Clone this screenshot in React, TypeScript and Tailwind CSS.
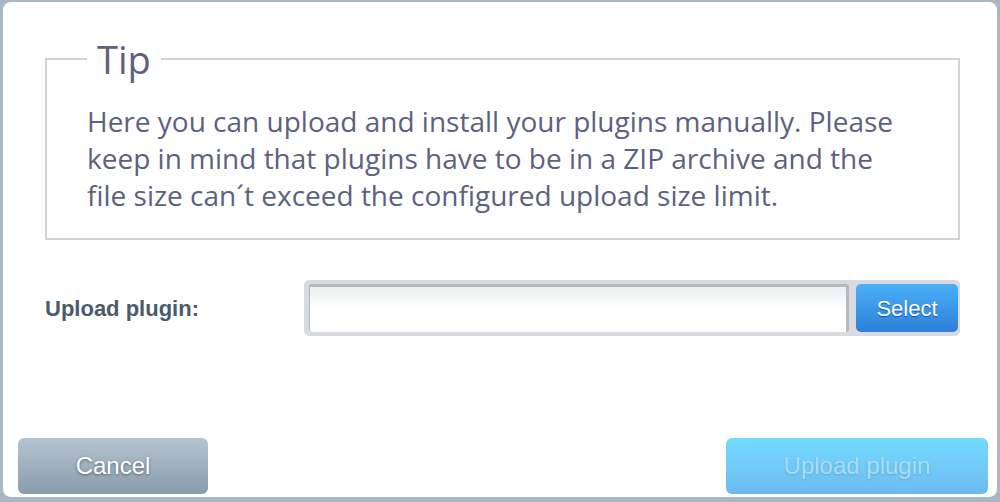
export default function App() {
  return (
    <div className="h-[502px] w-[1000px] bg-[#a9b7c5] pt-[2px] pl-[3px] overflow-hidden">
      <div className="relative h-[495px] w-[994px] rounded-[8px] bg-white">
        {/* Tip box */}
        <fieldset className="absolute left-[42px] top-[38px] w-[915px] h-[200px] border-2 border-[#cfd4da] pl-[40px] pt-[25px] font-['Open_Sans',sans-serif]">
          <legend className="px-[10px] text-[38px] leading-[38px] text-[#5d6180]">Tip</legend>
          <p className="w-[822px] text-[28px] leading-[37px] text-[#5d6180]">
            Here you can upload and install your plugins manually. Please keep in mind that plugins have to be in a ZIP archive and the file size can´t exceed the configured upload size limit.
          </p>
        </fieldset>

        {/* Upload row */}
        <div className="absolute left-[42px] top-[278px] flex items-center w-[915px]">
          <label className="w-[259px] font-['Liberation_Sans',Arial,sans-serif] text-[22px] font-bold text-[#4a5b6b]">
            Upload plugin:
          </label>
          <div className="flex items-center h-[56px] flex-1 rounded-[5px] bg-[#d7dbe0] pl-[5px] pr-[2px] gap-[7px]">
            <div className="h-[48px] flex-1 rounded-[3px] border-t-[3px] border-l border-r-[3px] border-[#b4b9bf] bg-gradient-to-b from-[#eceeef] via-white to-white" />
            <button className="h-[48px] w-[102px] rounded-[5px] bg-gradient-to-b from-[#4ab0f7] to-[#2f7fd8] font-['Liberation_Sans',Arial,sans-serif] text-[22px] text-white [text-shadow:0_1px_1px_rgba(0,40,120,0.6)]">
              Select
            </button>
          </div>
        </div>

        {/* Footer buttons */}
        <div className="absolute left-[15px] right-[9px] top-[436px] flex justify-between">
          <button className="h-[56px] w-[190px] rounded-[6px] bg-gradient-to-b from-[#b6c4cf] to-[#889cad] font-['Liberation_Sans',Arial,sans-serif] text-[24px] text-white [text-shadow:0_1px_3px_rgba(0,0,0,0.45)]">
            Cancel
          </button>
          <button className="h-[56px] w-[262px] rounded-[6px] bg-gradient-to-b from-[#74dbff] to-[#6cbbee] font-['Liberation_Sans',Arial,sans-serif] text-[24px] text-[#a9dcf2] [text-shadow:0_1px_2px_rgba(60,120,170,0.35)]">
            Upload plugin
          </button>
        </div>
      </div>
    </div>
  );
}
